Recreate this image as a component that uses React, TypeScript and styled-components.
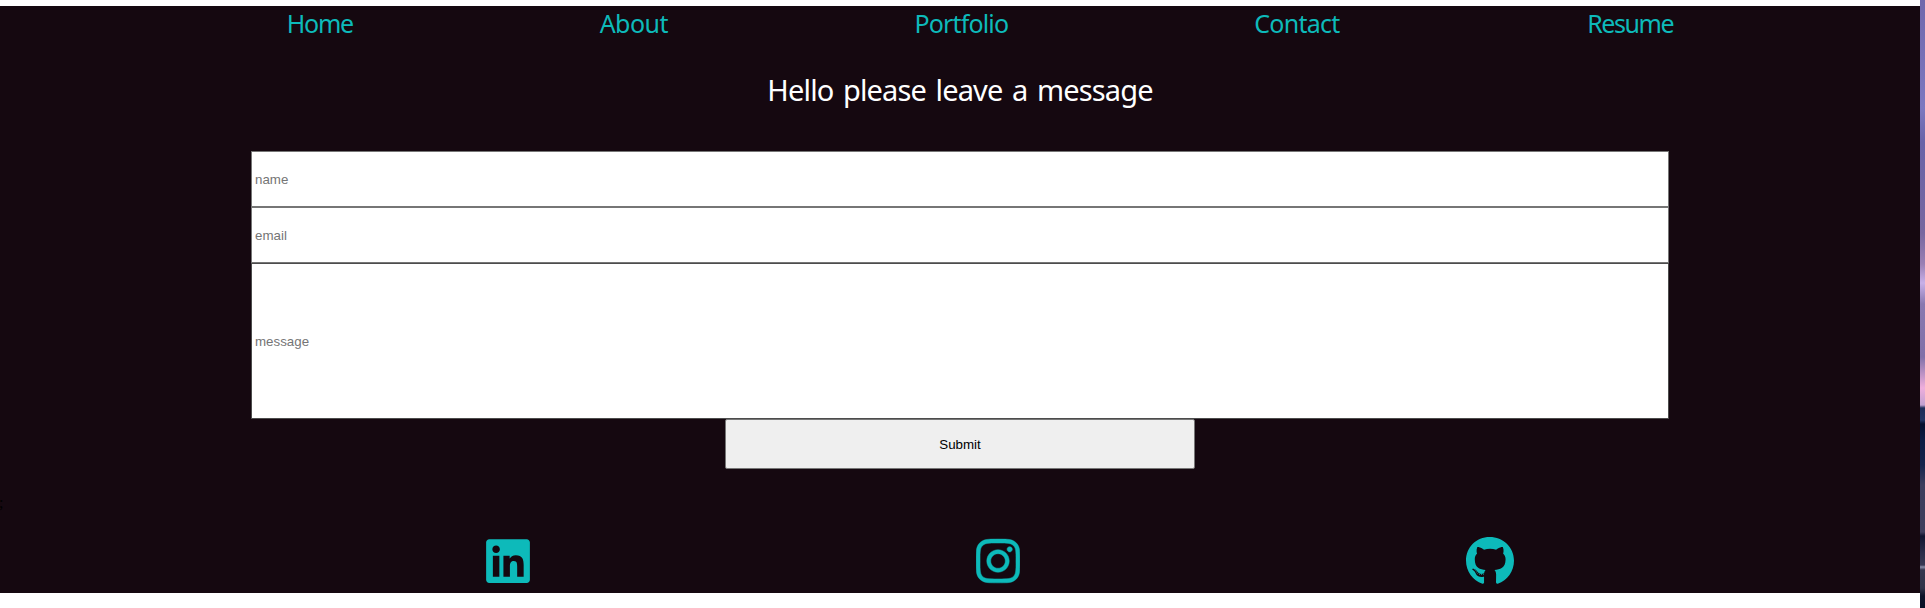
import React from 'react';
import styled, { createGlobalStyle } from 'styled-components';
import { FaGithub, FaInstagram, FaLinkedin } from 'react-icons/fa';

const GlobalStyle = createGlobalStyle`
  *, *::before, *::after { box-sizing: border-box; }
  body { margin: 0; background: #fff; overflow: hidden; }
`;

const Screen = styled.div`
  display: flex;
  width: 1925px;
  height: 608px;
  font-family: 'Segoe UI', 'Noto Sans', sans-serif;
`;

const Page = styled.main`
  position: relative;
  display: flex;
  flex-direction: column;
  width: 1920px;
  height: 587px;
  margin-top: 6px;
  background: #150810;
`;

const Nav = styled.nav`
  display: flex;
  justify-content: space-evenly;
  height: 44px;
  padding-left: 40px;
`;

const NavLink = styled.a<{ $width: number; $spacing: number }>`
  width: ${(p) => p.$width}px;
  font-size: 25px;
  line-height: 35px;
  letter-spacing: ${(p) => p.$spacing}px;
  white-space: nowrap;
  color: #0dbaba;
  text-decoration: none;
`;

const Title = styled.h1`
  margin: 15px 0 0;
  height: 86px;
  font-size: 29px;
  font-weight: 400;
  line-height: 50px;
  letter-spacing: -0.85px;
  word-spacing: 2.8px;
  text-align: center;
  color: #fff;
`;

const Form = styled.form`
  display: flex;
  flex-direction: column;
  align-items: center;
  width: 1418px;
  margin-left: 251px;
`;

const Field = styled.input<{ $height: number; $border?: string }>`
  width: 100%;
  height: ${(p) => p.$height}px;
  padding: 1px 3px;
  border: 1px solid ${(p) => p.$border ?? '#767676'};
  border-radius: 0;
  background: #fff;
  font: 13.333px 'Liberation Sans', Arial, sans-serif;
  &::placeholder { color: #757575; }
`;

const Submit = styled.button`
  width: 470px;
  height: 50px;
  padding: 1px 6px;
  border: 1px solid #767676;
  border-radius: 2px;
  background: #efefef;
  font: 13.333px 'Liberation Sans', Arial, sans-serif;
  color: #000;
`;

const Stray = styled.span`
  position: absolute;
  left: -1px;
  top: 487px;
  font: 16px/20px 'Liberation Serif', serif;
  color: #000;
`;

const Footer = styled.footer`
  display: flex;
  gap: 446px;
  margin-top: 67px;
  padding-left: 486px;
  color: #0dbaba;
`;

const SocialLink = styled.a<{ $width: number; $stroke?: number }>`
  display: block;
  width: ${(p) => p.$width}px;
  height: 50px;
  color: inherit;
  svg {
    display: block;
    width: 100%;
    height: 100%;
    stroke-width: ${(p) => p.$stroke ?? 0};
  }
`;

const Wallpaper = styled.aside`
  width: 5px;
  height: 608px;
  background: linear-gradient(
    #7068ac 0, #7c78c0 108px, #6963a8 142px, #77679f 233px, #9a80b4 264px,
    #c8b0e8 283px, #8878b0 304px, #8070a8 357px, #efaedc 388px, #c0a0d0 405px,
    #1c2c58 408px, #223564 420px, #05102f 424px, #0c1c44 440px, #14244c 465px,
    #3c3c5c 485px, #3e3e5c 532px, #101530 536px, #292c48 552px, #383a54 565px,
    #8a8ea8 567px, #34364e 570px, #303248 588px, #0c1228 596px, #081026 608px
  );
`;

const links = [
  { label: 'Home', width: 66, spacing: -1.3 },
  { label: 'About', width: 68, spacing: -0.55 },
  { label: 'Portfolio', width: 93, spacing: -0.85 },
  { label: 'Contact', width: 86, spacing: -0.75 },
  { label: 'Resume', width: 86, spacing: -1.4 },
];

export default function App() {
  return (
    <>
      <GlobalStyle />
      <Screen>
        <Page>
          <Nav>
            {links.map((l) => (
              <NavLink key={l.label} $width={l.width} $spacing={l.spacing}>{l.label}</NavLink>
            ))}
          </Nav>
          <Title>Hello please leave a message</Title>
          <Form>
            <Field $height={56} placeholder="name" />
            <Field $height={56} placeholder="email" />
            <Field $height={156} $border="#4c4c4c" placeholder="message" />
            <Submit type="button">Submit</Submit>
          </Form>
          <Stray>;</Stray>
          <Footer>
            <SocialLink $width={44} aria-label="LinkedIn"><FaLinkedin /></SocialLink>
            <SocialLink $width={44} $stroke={5} aria-label="Instagram"><FaInstagram /></SocialLink>
            <SocialLink $width={48} aria-label="GitHub"><FaGithub /></SocialLink>
          </Footer>
        </Page>
        <Wallpaper />
      </Screen>
    </>
  );
}
